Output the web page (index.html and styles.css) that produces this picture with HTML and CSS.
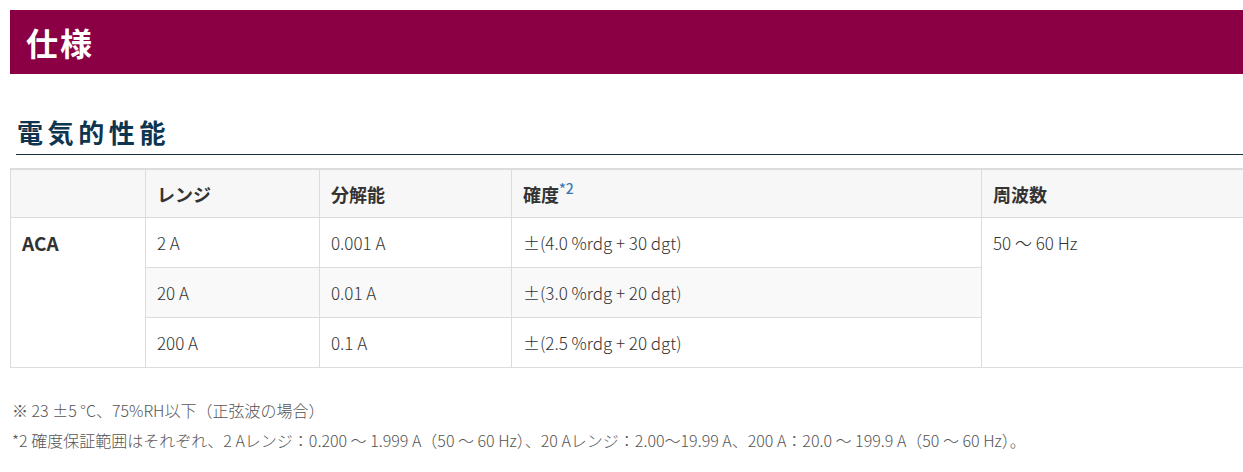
FILE: index.html
```html
<!DOCTYPE html>
<html lang="ja">
<head>
<meta charset="utf-8">
<link rel="stylesheet" href="styles.css">
</head>
<body>
<div class="page">
  <h1 class="banner">仕様</h1>
  <h2 class="section-title">電気的性能</h2>
  <table class="spec">
    <thead>
      <tr>
        <th class="c1"></th>
        <th class="c2">レンジ</th>
        <th class="c3">分解能</th>
        <th class="c4">確度<sup class="note">*2</sup></th>
        <th class="c5">周波数</th>
      </tr>
    </thead>
    <tbody>
      <tr>
        <th class="rowhead" rowspan="3">ACA</th>
        <td>2 A</td>
        <td>0.001 A</td>
        <td>±(4.0 %rdg + 30 dgt)</td>
        <td class="freq" rowspan="3">50 ～ 60 Hz</td>
      </tr>
      <tr class="alt">
        <td>20 A</td>
        <td>0.01 A</td>
        <td>±(3.0 %rdg + 20 dgt)</td>
      </tr>
      <tr>
        <td>200 A</td>
        <td>0.1 A</td>
        <td>±(2.5 %rdg + 20 dgt)</td>
      </tr>
    </tbody>
  </table>
  <div class="notes">
    <p>※ 23 ±5 °C、75%RH以下（正弦波の場合）</p>
    <p>*2 確度保証範囲はそれぞれ、2 Aレンジ：0.200 ～ 1.999 A（50 ～ 60 Hz）、20 Aレンジ：2.00～19.99 A、200 A：20.0 ～ 199.9 A（50 ～ 60 Hz）。</p>
  </div>
</div>
</body>
</html>
```

FILE: styles.css
```css
html, body {
  margin: 0;
  padding: 0;
  background: #fff;
}
body {
  font-family: "Noto Sans CJK JP", "Noto Sans", sans-serif;
  color: #333;
  overflow: hidden;
}
.page {
  padding: 10px 0 0 10px;
  width: 1253px;
}
.banner {
  margin: 0;
  height: 64px;
  background: #8b0044;
  color: #fff;
  font-size: 32px;
  font-weight: 700;
  line-height: 64px;
  padding-left: 16px;
  letter-spacing: 2px;
}
.section-title {
  margin: 40px 0 0 6px;
  padding: 0 0 4px 1px;
  border-bottom: 1px solid #1b2f3d;
  color: #0e3550;
  font-size: 26px;
  font-weight: 700;
  letter-spacing: 4.6px;
  line-height: 36px;
}
.spec {
  margin-top: 13px;
  width: 1253px;
  border-collapse: collapse;
  border-top: 2px solid #dcdcdc;
  font-size: 17px;
  font-weight: 300;
}
.spec th, .spec td {
  border: 1px solid #dcdcdc;
  text-align: left;
  vertical-align: top;
  padding: 12px 11px 0 11px;
  height: 37px;
}
.spec thead th {
  background: #f7f7f7;
  font-size: 18px;
  font-weight: 700;
  height: 36px;
  padding-top: 11px;
}
.spec .c1 { width: 112px; }
.spec .c2 { width: 151px; }
.spec .c3 { width: 169px; }
.spec .c4 { width: 447px; }
.spec .rowhead {
  font-size: 19px;
  font-weight: 700;
  background: #fff;
  padding-top: 11px;
}
.spec tr.alt td {
  background: #f9f9f9;
}
.spec .freq {
  background: #fff;
}
.note {
  color: #3b78b5;
  font-size: 14px;
  font-weight: 500;
  vertical-align: 8px;
  line-height: 0;
}
.notes {
  margin-top: 27px;
  padding-left: 2px;
  font-size: 16px;
  font-weight: 300;
  color: #555;
}
.notes p {
  margin: 0;
  line-height: 30px;
}
```
